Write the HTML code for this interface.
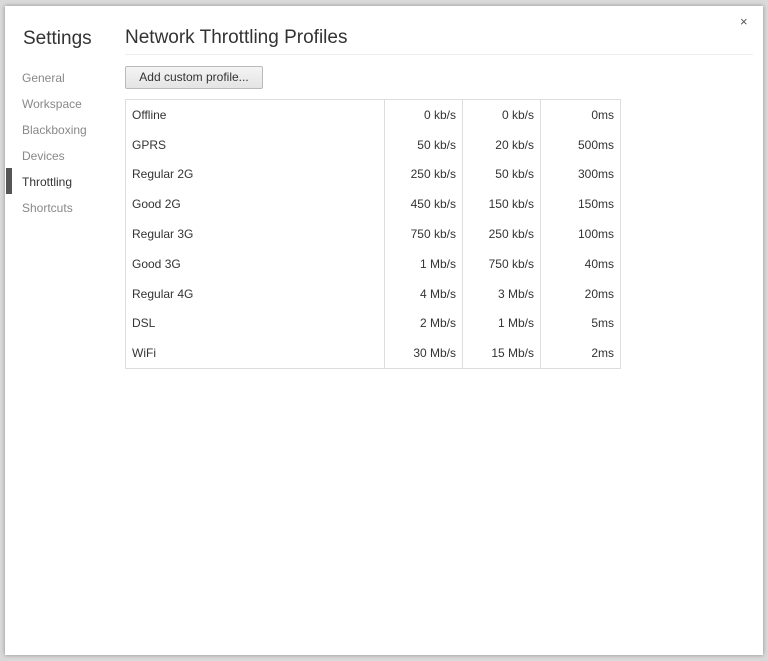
<!DOCTYPE html>
<html><head><style>
html,body{margin:0;width:768px;height:661px;overflow:hidden;background:#d9d9d9;font-family:"Liberation Sans","DejaVu Sans",sans-serif;}
.dlg{position:absolute;left:5px;top:6px;width:758px;height:649px;background:#fff;box-shadow:0 0 4px rgba(0,0,0,.35);}
.t1{position:absolute;left:18px;top:22px;font-size:19px;color:#333;}
.t2{position:absolute;left:120px;top:21px;font-size:19px;color:#333;}
.hr{position:absolute;left:120px;right:10px;top:48px;border-top:1px solid #eee;}
.x{position:absolute;left:735px;top:8px;font-size:13px;color:#555;}
.nav{position:absolute;left:17px;font-size:12px;color:#888;}
.sel{color:#333;}
.bar{position:absolute;left:1px;top:162px;width:6px;height:26px;background:#555;}
.btn{position:absolute;left:120px;top:60px;width:136px;height:21px;border:1px solid #b9b9b9;border-radius:2px;background:linear-gradient(#f4f4f4,#e4e4e4);font-size:12px;color:#333;text-align:center;line-height:21px;}
table{position:absolute;left:120px;top:93px;border-collapse:collapse;border:1px solid #ddd;font-size:12px;color:#333;}
td{height:29.8px;padding:0 6px;}
td.n{width:246px;}
td.v{width:65px;text-align:right;border-left:1px solid #ddd;}
td.l{width:67px;}
</style></head><body>
<div class="dlg">
<div class="t1">Settings</div>
<div class="t2">Network Throttling Profiles</div>
<div class="hr"></div>
<div class="x">×</div>
<div class="nav" style="top:65px">General</div>
<div class="nav" style="top:91px">Workspace</div>
<div class="nav" style="top:117px">Blackboxing</div>
<div class="nav" style="top:143px">Devices</div>
<div class="bar"></div>
<div class="nav sel" style="top:169px">Throttling</div>
<div class="nav" style="top:195px">Shortcuts</div>
<div class="btn">Add custom profile...</div>
<table>
<tr><td class="n">Offline</td><td class="v">0 kb/s</td><td class="v">0 kb/s</td><td class="v l">0ms</td></tr>
<tr><td class="n">GPRS</td><td class="v">50 kb/s</td><td class="v">20 kb/s</td><td class="v l">500ms</td></tr>
<tr><td class="n">Regular 2G</td><td class="v">250 kb/s</td><td class="v">50 kb/s</td><td class="v l">300ms</td></tr>
<tr><td class="n">Good 2G</td><td class="v">450 kb/s</td><td class="v">150 kb/s</td><td class="v l">150ms</td></tr>
<tr><td class="n">Regular 3G</td><td class="v">750 kb/s</td><td class="v">250 kb/s</td><td class="v l">100ms</td></tr>
<tr><td class="n">Good 3G</td><td class="v">1 Mb/s</td><td class="v">750 kb/s</td><td class="v l">40ms</td></tr>
<tr><td class="n">Regular 4G</td><td class="v">4 Mb/s</td><td class="v">3 Mb/s</td><td class="v l">20ms</td></tr>
<tr><td class="n">DSL</td><td class="v">2 Mb/s</td><td class="v">1 Mb/s</td><td class="v l">5ms</td></tr>
<tr><td class="n">WiFi</td><td class="v">30 Mb/s</td><td class="v">15 Mb/s</td><td class="v l">2ms</td></tr>
</table>
</div>
</body></html>
